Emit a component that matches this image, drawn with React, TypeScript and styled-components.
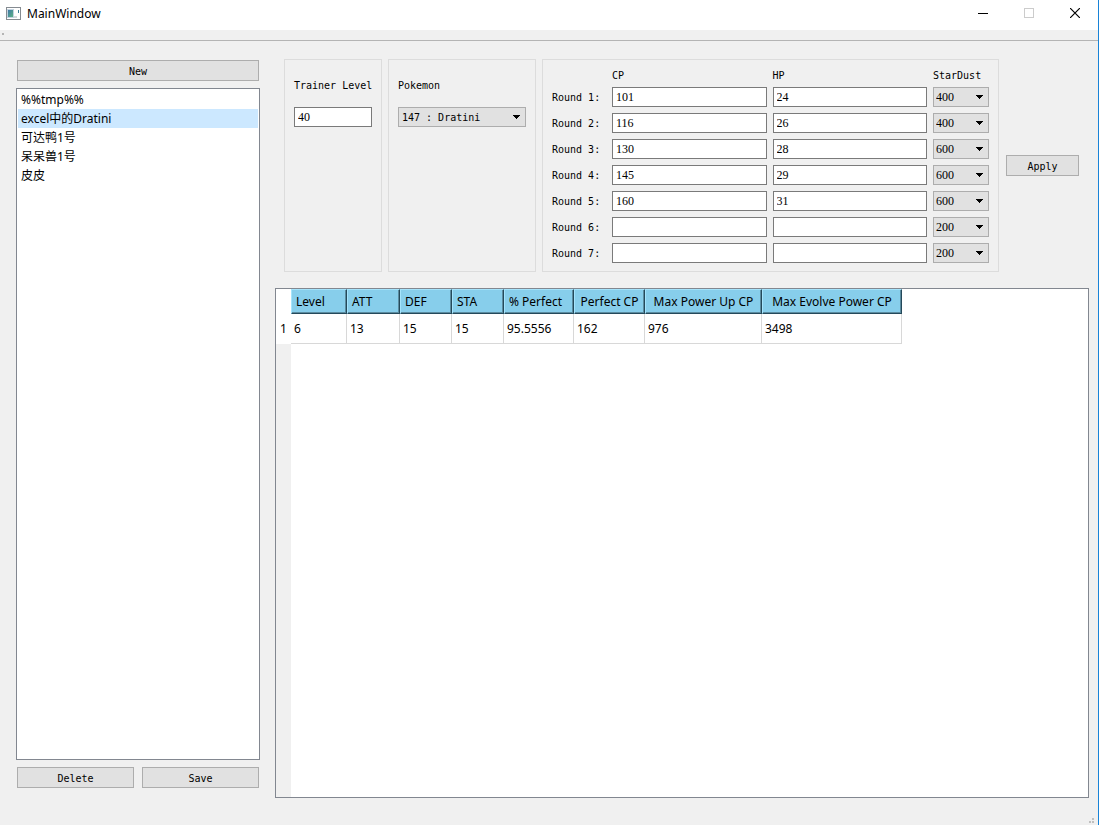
import React from "react";
import styled, { createGlobalStyle } from "styled-components";

const uiFont = `"Noto Sans", "Noto Sans CJK SC", sans-serif`;
const formFont = `"DejaVu Sans Mono", "Noto Sans CJK SC", monospace`;
const numberFont = `"Liberation Serif", "Noto Sans CJK SC", serif`;

const GlobalStyle = createGlobalStyle`
  *, *::before, *::after { box-sizing: border-box; }
  body { margin: 0; background: #f0f0f0; color: #000; font: 12px/18px ${uiFont}; }
  button, input, select { margin: 0; border-radius: 0; color: inherit; }
`;

const Window = styled.div`
  position: relative;
  display: flex;
  flex-direction: column;
  min-height: 100vh;
  border-right: 1px solid #1883d7;
`;

const TitleBar = styled.header`
  display: flex;
  align-items: center;
  gap: 6px;
  height: 30px;
  padding: 0 0 4px 6px;
  background: #fff;
`;

const Title = styled.h1`
  flex: 1;
  margin: 0;
  padding-top: 2px;
  font-size: 12px;
  font-weight: 400;
`;

const WindowButtons = styled.div`
  display: flex;
`;

const WindowButton = styled.button`
  display: grid;
  place-items: center;
  width: 46px;
  height: 26px;
  padding: 0;
  border: 0;
  background: none;
`;

const ToolBar = styled.div`
  height: 11px;
  padding: 3px 2px;
  border-bottom: 1px solid #b4b4b4;
  svg { display: block; }
`;

const Content = styled.main`
  flex: 1;
  display: flex;
  gap: 15px;
  padding: 18px 9px 27px 16px;
`;

const Sidebar = styled.aside`
  flex: 0 0 244px;
  display: flex;
  flex-direction: column;
  gap: 6px;
  margin-bottom: 9px;
`;

const PushButton = styled.button`
  flex: 1;
  height: 21px;
  margin: 1px;
  padding: 2px 0 0;
  border: 1px solid #adadad;
  background: #e1e1e1;
  font: 10px/16px ${formFont};
`;

const ButtonRow = styled.div`
  display: flex;
  gap: 6px;
`;

const SavedList = styled.ul`
  flex: 1;
  margin: 0;
  padding: 1px;
  border: 1px solid #828790;
  background: #fff;
  list-style: none;
`;

const SavedItem = styled.li<{ $selected?: boolean }>`
  height: 19px;
  padding-left: 3px;
  line-height: 19px;
  background: ${(p) => (p.$selected ? "#cce8ff" : "transparent")};
`;

const Workspace = styled.div`
  flex: 1;
  min-width: 0;
  display: flex;
  flex-direction: column;
  gap: 16px;
`;

const Controls = styled.form`
  display: grid;
  grid-template-columns: 98px 148px 1fr 75px;
  gap: 6px;
  padding: 0 9px;
  font: 10px/12px ${formFont};
`;

const Panel = styled.section`
  padding: 9px 9px 8px;
  border: 1px solid #dcdcdc;
`;

const Field = styled.div`
  display: flex;
  flex-direction: column;
  gap: 6px;
`;

const FieldLabel = styled.label`
  padding-top: 2px;
  line-height: 30px;
  white-space: nowrap;
`;

const TextInput = styled.input`
  width: 100%;
  min-width: 0;
  height: 20px;
  padding: 0 3px;
  border: 1px solid #7a7a7a;
  background: #fff;
  font: 12px/18px ${numberFont};
`;

const SelectBox = styled.div<{ $numeric?: boolean }>`
  position: relative;
  height: 20px;
  select {
    display: block;
    appearance: none;
    width: 100%;
    height: 20px;
    padding: ${(p) => (p.$numeric ? "0 16px 0 2px" : "1px 16px 0 3px")};
    border: 1px solid #adadad;
    background: #e1e1e1;
    font: ${(p) => (p.$numeric ? `12px/18px ${numberFont}` : `10px/18px ${formFont}`)};
  }
  svg {
    position: absolute;
    top: 8px;
    right: 5px;
    pointer-events: none;
  }
`;

const RoundGrid = styled.div`
  display: grid;
  grid-template-columns: 54px 1fr 1fr 56px;
  gap: 6px;
`;

const ColumnCaption = styled.span`
  height: 12px;
  line-height: 14px;
`;

const RoundLabel = styled.label`
  height: 20px;
  line-height: 22px;
`;

const ApplyCell = styled.div`
  display: flex;
  align-items: center;
`;

const ResultView = styled.div`
  flex: 1;
  border: 1px solid #828790;
  background: linear-gradient(to right, #f0f0f0 15px, #fff 15px);
`;

const ResultTable = styled.table`
  width: 626px;
  table-layout: fixed;
  border-collapse: separate;
  border-spacing: 0;
  background: #fff;
  th, td {
    padding: 0 0 0 3px;
    text-align: left;
    font-weight: 400;
    white-space: nowrap;
  }
`;

const HeadCell = styled.th<{ $centered?: boolean }>`
  && {
    height: 25px;
    padding-left: ${(p) => (p.$centered ? "0" : "4px")};
    text-align: ${(p) => (p.$centered ? "center" : "left")};
    border: 1px solid;
    border-color: #a5e4fc #24495a #24495a #a5e4fc;
    background: #87ceeb;
    box-shadow: inset -1px -1px #5b8b9f;
  }
`;

const DataCell = styled.td`
  height: 30px;
  border-right: 1px solid #d8d8d8;
  border-bottom: 1px solid #d8d8d8;
`;

const RowHead = styled.th`
  && { padding-left: 4px; }
`;

const SizeGrip = styled.svg`
  position: absolute;
  right: 2px;
  bottom: 0;
`;

const saved = ["%%tmp%%", "excel中的Dratini", "可达鸭1号", "呆呆兽1号", "皮皮"];

const rounds = [
  { cp: "101", hp: "24", dust: "400" },
  { cp: "116", hp: "26", dust: "400" },
  { cp: "130", hp: "28", dust: "600" },
  { cp: "145", hp: "29", dust: "600" },
  { cp: "160", hp: "31", dust: "600" },
  { cp: "", hp: "", dust: "200" },
  { cp: "", hp: "", dust: "200" },
];

const columns = [
  { name: "Level", width: 56, value: "6" },
  { name: "ATT", width: 53, value: "13" },
  { name: "DEF", width: 52, value: "15" },
  { name: "STA", width: 52, value: "15" },
  { name: "% Perfect", width: 70, value: "95.5556" },
  { name: "Perfect CP", width: 71, value: "162", centered: true },
  { name: "Max Power Up CP", width: 117, value: "976", centered: true },
  { name: "Max Evolve Power CP", width: 140, value: "3498", centered: true },
];

type DropDownProps = {
  id?: string;
  label?: string;
  value: string;
  options: string[];
  numeric?: boolean;
};

function DropDown({ id, label, value, options, numeric }: DropDownProps) {
  return (
    <SelectBox $numeric={numeric}>
      <select id={id} aria-label={label} defaultValue={value}>
        {options.map((o) => (
          <option key={o}>{o}</option>
        ))}
      </select>
      <svg width="8" height="4" viewBox="0 0 8 4" aria-hidden="true">
        <path d="M0 0h7v1h-1v1h-1v1h-1v1h-1v-1h-1v-1h-1v-1h-1z" />
      </svg>
    </SelectBox>
  );
}

export default function App() {
  return (
    <Window>
      <GlobalStyle />
      <TitleBar>
        <svg width="15" height="13" viewBox="0 0 15 13" aria-hidden="true">
          <defs>
            <linearGradient id="pane" x1="0" y1="0" x2="1" y2="1">
              <stop offset="0" stopColor="#3f78a8" />
              <stop offset="1" stopColor="#5cb284" />
            </linearGradient>
          </defs>
          <rect x=".5" y=".5" width="14" height="12" fill="#fff" stroke="#858b91" />
          <path fill="#c3d3e0" d="M1 2h7v9h-7z" />
          <path fill="url(#pane)" d="M2 3h5v7h-5z" />
          <path fill="#d4d9dd" d="M8 9h3v2h-3z" />
          <path fill="#3d7f99" d="M12 3h1v3h-1z" />
        </svg>
        <Title>MainWindow</Title>
        <WindowButtons>
          <WindowButton aria-label="Minimize">
            <svg width="10" height="10" viewBox="0 0 10 10"><path d="M0 5h10v1h-10z" /></svg>
          </WindowButton>
          <WindowButton aria-label="Maximize" disabled>
            <svg width="10" height="10" viewBox="0 0 10 10"><rect x=".5" y=".5" width="9" height="9" fill="none" stroke="#ccc" /></svg>
          </WindowButton>
          <WindowButton aria-label="Close">
            <svg width="10" height="10" viewBox="0 0 10 10"><path d="M0 0L10 10M10 0L0 10" stroke="#000" strokeWidth="1.2" /></svg>
          </WindowButton>
        </WindowButtons>
      </TitleBar>
      <ToolBar>
        <svg width="3" height="3" aria-hidden="true"><rect x="0" y="0" width="2" height="2" fill="#b4b4b4" /></svg>
      </ToolBar>
      <Content>
        <Sidebar>
          <ButtonRow>
            <PushButton type="button">New</PushButton>
          </ButtonRow>
          <SavedList>
            {saved.map((name, i) => (
              <SavedItem key={name} $selected={i === 1}>{name}</SavedItem>
            ))}
          </SavedList>
          <ButtonRow>
            <PushButton type="button">Delete</PushButton>
            <PushButton type="button">Save</PushButton>
          </ButtonRow>
        </Sidebar>
        <Workspace>
          <Controls onSubmit={(e) => e.preventDefault()}>
            <Panel>
              <Field>
                <FieldLabel htmlFor="trainer">Trainer Level</FieldLabel>
                <TextInput id="trainer" defaultValue="40" />
              </Field>
            </Panel>
            <Panel>
              <Field>
                <FieldLabel htmlFor="pokemon">Pokemon</FieldLabel>
                <DropDown id="pokemon" value="147 : Dratini" options={["147 : Dratini"]} />
              </Field>
            </Panel>
            <Panel>
              <RoundGrid>
                <span />
                <ColumnCaption>CP</ColumnCaption>
                <ColumnCaption>HP</ColumnCaption>
                <ColumnCaption>StarDust</ColumnCaption>
                {rounds.map((r, i) => (
                  <React.Fragment key={i}>
                    <RoundLabel htmlFor={`cp${i}`}>{`Round ${i + 1}:`}</RoundLabel>
                    <TextInput id={`cp${i}`} defaultValue={r.cp} />
                    <TextInput aria-label={`Round ${i + 1} HP`} defaultValue={r.hp} />
                    <DropDown
                      numeric
                      label={`Round ${i + 1} StarDust`}
                      value={r.dust}
                      options={["200", "400", "600"]}
                    />
                  </React.Fragment>
                ))}
              </RoundGrid>
            </Panel>
            <ApplyCell>
              <PushButton type="submit">Apply</PushButton>
            </ApplyCell>
          </Controls>
          <ResultView>
            <ResultTable>
              <colgroup>
                <col width={15} />
                {columns.map((c) => (
                  <col key={c.name} width={c.width} />
                ))}
              </colgroup>
              <thead>
                <tr>
                  <td />
                  {columns.map((c) => (
                    <HeadCell key={c.name} scope="col" $centered={c.centered}>{c.name}</HeadCell>
                  ))}
                </tr>
              </thead>
              <tbody>
                <tr>
                  <RowHead scope="row">1</RowHead>
                  {columns.map((c) => (
                    <DataCell key={c.name}>{c.value}</DataCell>
                  ))}
                </tr>
              </tbody>
            </ResultTable>
          </ResultView>
        </Workspace>
      </Content>
      <SizeGrip width="8" height="8" viewBox="0 0 8 8" aria-hidden="true">
        <path fill="#bfbfbf" d="M4 1h2v2h-2zM4 4h2v2h-2zM1 4h2v2h-2z" />
      </SizeGrip>
    </Window>
  );
}
